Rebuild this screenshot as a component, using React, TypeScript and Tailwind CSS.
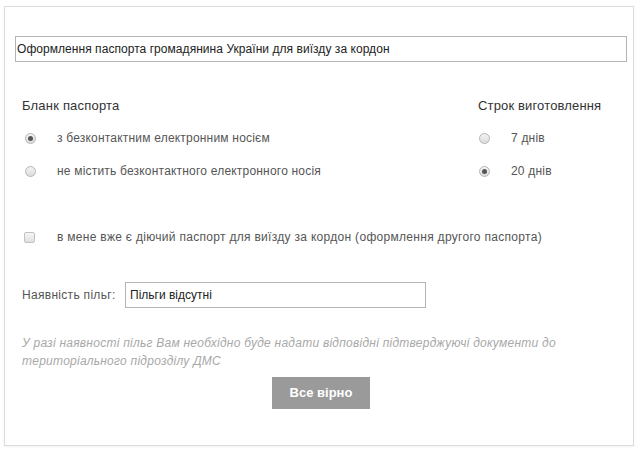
import React from "react";

function Radio({ checked }: { checked?: boolean }) {
  return (
    <span className="relative inline-flex h-[11px] w-[11px] shrink-0 items-center justify-center rounded-full border border-[#b5b5b5] bg-gradient-to-b from-[#f4f4f4] to-[#dcdcdc]">
      {checked && <span className="h-[5px] w-[5px] rounded-full bg-[#555]" />}
    </span>
  );
}

function RadioRow({ checked, label }: { checked?: boolean; label: string }) {
  return (
    <div className="flex h-[20px] items-center">
      <Radio checked={checked} />
      <span className="ml-[21px] text-[12px] tracking-[0.2px] text-[#555]">{label}</span>
    </div>
  );
}

export default function App() {
  return (
    <div className="h-[451px] w-[640px] bg-white pl-[4px] pt-[6px]" style={{ fontFamily: '"Liberation Sans", Arial, sans-serif' }}>
      <div className="h-[440px] w-[630px] border border-[#dcdcdc] shadow-[0_1px_2px_rgba(0,0,0,0.06)]">
        <div className="pl-[10px] pt-[29px]">
          <div className="flex h-[26px] w-[612px] items-center border border-[#b4b4b4] pl-[1px] text-[12px] tracking-[0.05px] text-[#222]">
            Оформлення паспорта громадянина України для виїзду за кордон
          </div>
        </div>

        <div className="mt-[36px] flex">
          <div className="flex-1 pl-[17px]">
            <div className="h-[16px] text-[13px] leading-[16px] tracking-[0.2px] text-[#333]">Бланк паспорта</div>
            <div className="mt-[14px] flex flex-col gap-[13px] pl-[3px]">
              <RadioRow checked label="з безконтактним електронним носієм" />
              <RadioRow label="не містить безконтактного електронного носія" />
            </div>
          </div>
          <div className="w-[155px]">
            <div className="h-[16px] text-[13px] leading-[16px] tracking-[0.15px] text-[#333]">Строк виготовлення</div>
            <div className="mt-[14px] flex flex-col gap-[13px] pl-[1px]">
              <RadioRow label="7 днів" />
              <RadioRow checked label="20 днів" />
            </div>
          </div>
        </div>

        <div className="mt-[46px] flex h-[20px] items-center pl-[19px]">
          <span className="h-[11px] w-[11px] rounded-[2px] border border-[#c2c2c2] bg-gradient-to-b from-[#f6f6f6] to-[#e0e0e0]" />
          <span className="ml-[22px] text-[12px] tracking-[0.3px] text-[#555]">
            в мене вже є діючий паспорт для виїзду за кордон (оформлення другого паспорта)
          </span>
        </div>

        <div className="mt-[35px] flex h-[26px] items-center pl-[17px]">
          <span className="w-[103px] text-[12px] tracking-[0.3px] text-[#555]">Наявність пільг:</span>
          <div className="flex h-[26px] w-[301px] items-center border border-[#b4b4b4] pl-[4px] text-[12px] text-[#222]">
            Пільги відсутні
          </div>
        </div>

        <p className="mt-[26px] pl-[17px] pr-[50px] text-[12px] italic leading-[18px] tracking-[0.25px] text-[#a8a8a8]">
          У разі наявності пільг Вам необхідно буде надати відповідні підтверджуючі документи до територіального підрозділу ДМС
        </p>

        <div className="mt-[7px] flex justify-center pl-[4px]">
          <button className="flex h-[32px] w-[98px] items-center justify-center bg-[#9a9a9a] text-[13px] font-bold text-white">
            Все вірно
          </button>
        </div>
      </div>
    </div>
  );
}
